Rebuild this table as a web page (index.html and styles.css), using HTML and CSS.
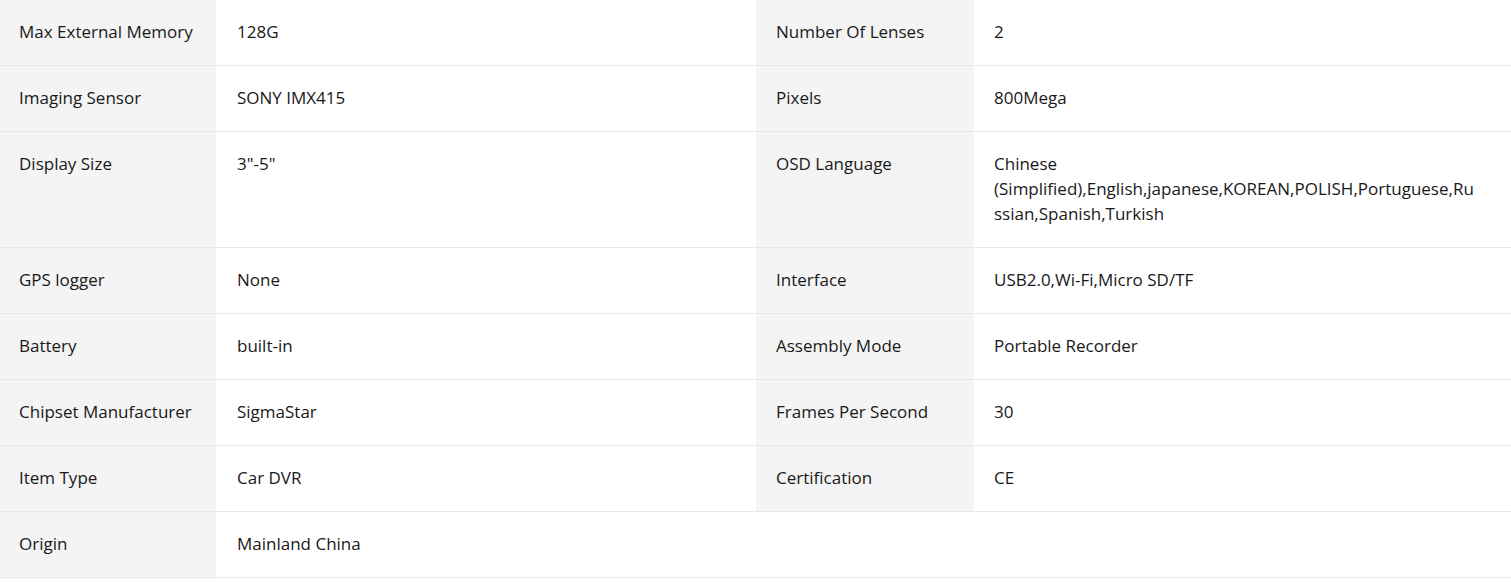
FILE: index.html
```html
<!DOCTYPE html>
<html>
<head>
<meta charset="utf-8">
<link rel="stylesheet" href="styles.css">
</head>
<body>
<div class="specs">
  <div class="row">
    <div class="label">Max External Memory</div><div class="value">128G</div>
    <div class="label">Number Of Lenses</div><div class="value">2</div>
  </div>
  <div class="row">
    <div class="label">Imaging Sensor</div><div class="value">SONY IMX415</div>
    <div class="label">Pixels</div><div class="value">800Mega</div>
  </div>
  <div class="row">
    <div class="label">Display Size</div><div class="value">3"-5"</div>
    <div class="label">OSD Language</div><div class="value">Chinese (Simplified),English,japanese,KOREAN,POLISH,Portuguese,Russian,Spanish,Turkish</div>
  </div>
  <div class="row">
    <div class="label">GPS logger</div><div class="value">None</div>
    <div class="label">Interface</div><div class="value">USB2.0,Wi-Fi,Micro SD/TF</div>
  </div>
  <div class="row">
    <div class="label">Battery</div><div class="value">built-in</div>
    <div class="label">Assembly Mode</div><div class="value">Portable Recorder</div>
  </div>
  <div class="row">
    <div class="label">Chipset Manufacturer</div><div class="value">SigmaStar</div>
    <div class="label">Frames Per Second</div><div class="value">30</div>
  </div>
  <div class="row">
    <div class="label">Item Type</div><div class="value">Car DVR</div>
    <div class="label">Certification</div><div class="value">CE</div>
  </div>
  <div class="row">
    <div class="label">Origin</div><div class="value">Mainland China</div>
  </div>
</div>
</body>
</html>
```
FILE: styles.css
```css
html, body {
  margin: 0;
  padding: 0;
  background: #ffffff;
}
body {
  font-family: "Open Sans", "Liberation Sans", sans-serif;
  font-size: 17px;
  line-height: 25px;
  color: #191919;
}
.specs {
  width: 1511px;
}
.row {
  display: grid;
  grid-template-columns: 216px 540px 218px 1fr;
  border-bottom: 1px solid #e8e8e8;
}
.label {
  background: #f4f4f4;
  padding: 19px 20px 21px 20px;
}
.row .label:first-child {
  padding-left: 19px;
}
.value {
  padding: 19px 31px 21px 20px;
  overflow-wrap: break-word;
  min-width: 0;
}
.row .label:first-child + .value {
  padding-left: 21px;
}
```
